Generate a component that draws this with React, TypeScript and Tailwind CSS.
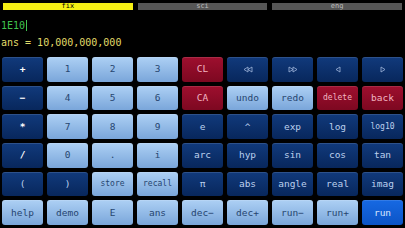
import React from "react";

type Kind = "dark" | "light" | "red" | "run";

interface Key {
  label: React.ReactNode;
  kind: Kind;
  small?: boolean;
  strong?: boolean;
}

const kindClass: Record<Kind, string> = {
  dark: "bg-gradient-to-b from-[#113a7c] to-[#08275c] text-[#bcd0ee]",
  light: "bg-gradient-to-b from-[#add0f4] to-[#7aa6da] text-[#26456f]",
  red: "bg-gradient-to-b from-[#9e0f2e] to-[#7d0821] text-[#f2b5c1]",
  run: "bg-gradient-to-b from-[#1769e3] to-[#0b54c6] text-[#d9e8ff]",
};

const Tri = ({ dir, x }: { dir: "l" | "r"; x: number }) => (
  <polygon
    points={dir === "l" ? `${x + 4},1 ${x + 4},6 ${x},3.5` : `${x},1 ${x},6 ${x + 4},3.5`}
    fill="none"
    stroke="#9fb5da"
    strokeWidth="0.8"
  />
);

const Arrows = ({ dir, double }: { dir: "l" | "r"; double?: boolean }) => (
  <svg width={double ? 10 : 6} height="7" viewBox={double ? "0 0 10 7" : "0 0 6 7"}>
    {double ? (
      <>
        <Tri dir={dir} x={1} />
        <Tri dir={dir} x={5} />
      </>
    ) : (
      <Tri dir={dir} x={1} />
    )}
  </svg>
);

const keys: Key[] = [
  { label: "+", kind: "dark", strong: true },
  { label: "1", kind: "light" },
  { label: "2", kind: "light" },
  { label: "3", kind: "light" },
  { label: "CL", kind: "red" },
  { label: <Arrows dir="l" double />, kind: "dark" },
  { label: <Arrows dir="r" double />, kind: "dark" },
  { label: <Arrows dir="l" />, kind: "dark" },
  { label: <Arrows dir="r" />, kind: "dark" },

  { label: "−", kind: "dark", strong: true },
  { label: "4", kind: "light" },
  { label: "5", kind: "light" },
  { label: "6", kind: "light" },
  { label: "CA", kind: "red" },
  { label: "undo", kind: "light" },
  { label: "redo", kind: "light" },
  { label: "delete", kind: "red", small: true },
  { label: "back", kind: "red" },

  { label: "*", kind: "dark", strong: true },
  { label: "7", kind: "light" },
  { label: "8", kind: "light" },
  { label: "9", kind: "light" },
  { label: "e", kind: "dark" },
  { label: "^", kind: "dark" },
  { label: "exp", kind: "dark" },
  { label: "log", kind: "dark" },
  { label: "log10", kind: "dark", small: true },

  { label: "/", kind: "dark", strong: true },
  { label: "0", kind: "light" },
  { label: ".", kind: "light" },
  { label: "i", kind: "light" },
  { label: "arc", kind: "dark" },
  { label: "hyp", kind: "dark" },
  { label: "sin", kind: "dark" },
  { label: "cos", kind: "dark" },
  { label: "tan", kind: "dark" },

  { label: "(", kind: "dark" },
  { label: ")", kind: "dark" },
  { label: "store", kind: "light", small: true },
  { label: "recall", kind: "light", small: true },
  { label: "π", kind: "dark" },
  { label: "abs", kind: "dark" },
  { label: "angle", kind: "dark" },
  { label: "real", kind: "dark" },
  { label: "imag", kind: "dark" },

  { label: "help", kind: "light" },
  { label: "demo", kind: "light" },
  { label: "E", kind: "light" },
  { label: "ans", kind: "light" },
  { label: "dec−", kind: "light" },
  { label: "dec+", kind: "light" },
  { label: "run−", kind: "light" },
  { label: "run+", kind: "light" },
  { label: "run", kind: "run" },
];

const App: React.FC = () => {
  return (
    <div className="w-[405px] h-[228px] bg-black overflow-hidden flex flex-col font-['DejaVu_Sans_Mono',monospace]">
      {/* mode tabs */}
      <div className="mt-[3px] px-[3px] flex gap-[5px]">
        <div className="flex-1 h-[7px] bg-[#f5ef14] text-black text-[7px] leading-[7px] text-center">fix</div>
        <div className="flex-1 h-[7px] bg-[#565656] text-[#bdbdbd] text-[7px] leading-[7px] text-center">sci</div>
        <div className="flex-1 h-[7px] bg-[#565656] text-[#bdbdbd] text-[7px] leading-[7px] text-center">eng</div>
      </div>

      {/* display */}
      <div className="mt-[7px] pl-[1px] text-[10px] leading-[17px]">
        <div className="flex items-center text-[#3fc44f]">
          1E10
          <span className="ml-[1px] w-px h-[11px] bg-[#3fc44f]" />
        </div>
        <div className="text-[#e2dc6a] whitespace-pre">ans = 10,000,000,000</div>
      </div>

      {/* keypad */}
      <div className="mt-[6px] px-[2px] h-[168px] grid grid-cols-9 grid-rows-6 gap-[4px]">
        {keys.map((k, i) => (
          <div
            key={i}
            className={`rounded-[3px] flex items-center justify-center shadow-[inset_0_1px_0_rgba(255,255,255,0.12)] ${kindClass[k.kind]} ${
              k.small ? "text-[8px]" : "text-[9.5px]"
            } ${k.strong ? "text-white font-bold" : ""}`}
          >
            {k.label}
          </div>
        ))}
      </div>
    </div>
  );
};

export default App;
